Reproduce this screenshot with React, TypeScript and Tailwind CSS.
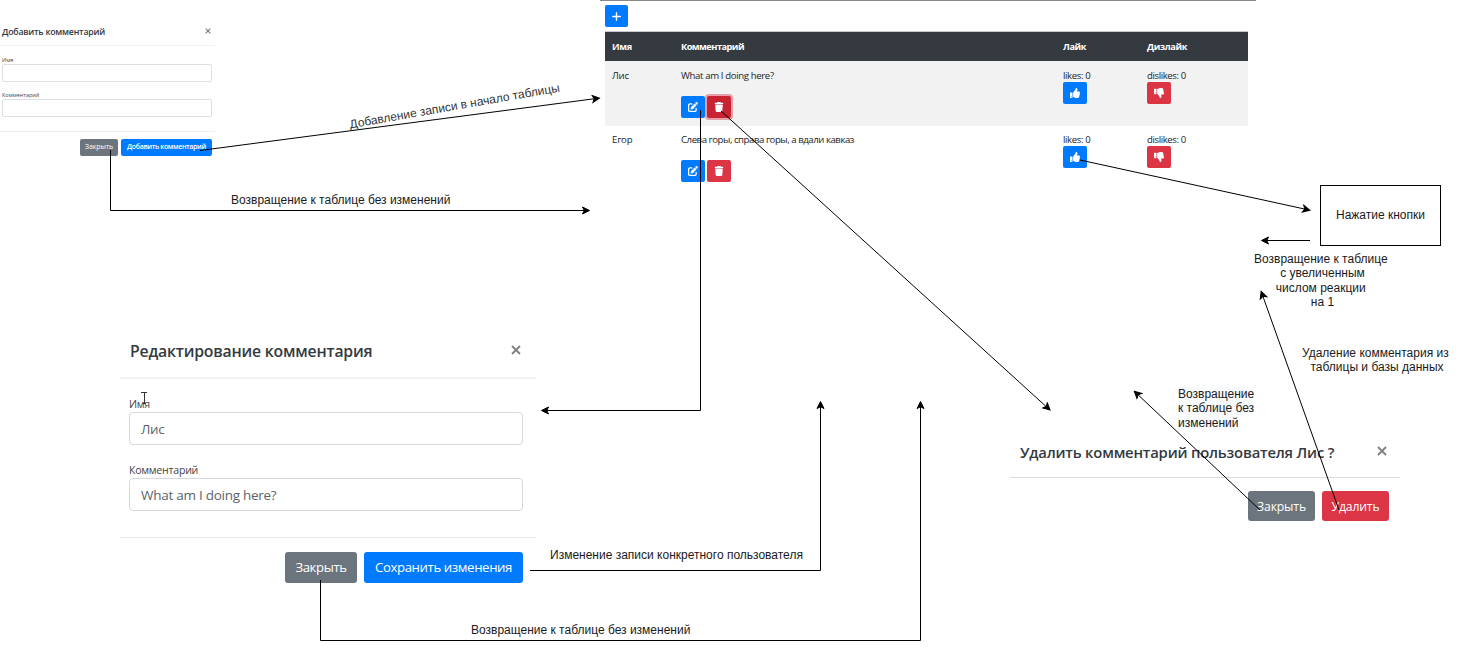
import type { ReactNode } from "react";
import { FaThumbsUp, FaThumbsDown } from "react-icons/fa";
import { FaPlus, FaPenToSquare, FaTrash } from "react-icons/fa6";

const ui = "font-['Open_Sans','Noto_Sans',sans-serif]";

function Close({ size, className }: { size: number; className: string }) {
  return (
    <svg width={size} height={size} viewBox="0 0 10 10" className={className}>
      <path d="M1 1 9 9M9 1 1 9" fill="none" stroke="currentColor" strokeWidth="1.8" />
    </svg>
  );
}

function AddDialog() {
  return (
    <section className={`absolute left-0 top-[18px] w-[215px] text-[#212529] ${ui}`}>
      <header className="flex h-[28px] items-center justify-between border-b border-[#f1f1f1] pl-[2px] pr-1">
        <h2 className="whitespace-nowrap pt-px text-[8.8px] font-semibold leading-none tracking-[-0.23px] text-[#343a40]">Добавить комментарий</h2>
        <Close size={6} className="mb-[2px] text-[#777]" />
      </header>
      <div className="flex flex-col pl-[2px] pr-[3px] pt-[10px]">
        <label className="h-[8px] text-[5.5px] leading-[8px] text-[#444]">Имя</label>
        <div className="h-[18px] rounded-[2px] border border-[#dce0e5]" />
        <label className="mt-[9px] h-[8px] text-[5.5px] leading-[8px] text-[#444]">Комментарий</label>
        <div className="h-[18px] rounded-[2px] border border-[#dce0e5]" />
      </div>
      <footer className="mt-[14px] flex justify-end gap-[3px] border-t border-[#eee] pr-[3px] pt-[7px] text-[7px] text-white">
        <button className="h-[17px] w-[38px] rounded-[2px] bg-[#6c757d] tracking-[-0.1px]">Закрыть</button>
        <button className="h-[17px] w-[91px] whitespace-nowrap rounded-[2px] bg-[#007bff] font-semibold tracking-[-0.34px]">Добавить комментарий</button>
      </footer>
    </section>
  );
}

function IconButton({ tone, children }: { tone: string; children: ReactNode }) {
  return (
    <button className={`flex h-[22px] w-6 items-center justify-center rounded-[2px] text-[10px] text-white ${tone}`}>
      {children}
    </button>
  );
}

const rows = [
  { name: "Лис", text: "What am I doing here?", focused: true, spacing: "tracking-[-0.36px]" },
  { name: "Егор", text: "Слева горы, справа горы, а вдали кавказ", focused: false, spacing: "tracking-[-0.45px]" },
];

const columns = "grid grid-cols-[69px_382px_84px_108px]";

function CommentTable() {
  return (
    <section className={`absolute left-[600px] top-0 w-[656px] border-t border-[#888] pl-[5px] pr-2 text-[9.6px] text-[#212529] ${ui}`}>
      <button className="mt-1 flex h-[22px] w-[23px] items-center justify-center rounded-[2px] bg-[#007bff] text-[11px] text-white">
        <FaPlus />
      </button>
      <div className={`${columns} mt-1 h-[30px] items-center border-t border-[#c9cccf] bg-[#343a40] text-[9.2px] font-bold tracking-[-0.5px] text-white`}>
        <span className="pl-[7px] tracking-[-0.3px]">Имя</span>
        <span className="pl-[7px]">Комментарий</span>
        <span className="pl-[7px] tracking-[-0.4px]">Лайк</span>
        <span className="pl-[7px] tracking-[-0.35px]">Дизлайк</span>
      </div>
      {rows.map((row) => (
        <div key={row.name} className={`${columns} h-[65px] items-start leading-[15px] ${row.focused ? "bg-[#f2f2f2] pt-[7px]" : "bg-white pt-[6px]"}`}>
          <span className="pl-[7px] tracking-[-0.2px]">{row.name}</span>
          <div className="pl-[7px]">
            <p className={row.spacing}>{row.text}</p>
            <div className="mt-[13px] flex gap-[2px]">
              <IconButton tone="bg-[#007bff]"><FaPenToSquare /></IconButton>
              <IconButton tone={row.focused ? "bg-[#c82333] ring-2 ring-[#e8a0a8]" : "bg-[#dc3545]"}><FaTrash /></IconButton>
            </div>
          </div>
          <div className="pl-[7px] tracking-[-0.38px]">
            <p className="h-[14px]">likes: 0</p>
            <IconButton tone="bg-[#007bff]"><FaThumbsUp /></IconButton>
          </div>
          <div className="pl-[7px] tracking-[-0.4px]">
            <p className="h-[14px]">dislikes: 0</p>
            <IconButton tone="bg-[#dc3545]"><FaThumbsDown /></IconButton>
          </div>
        </div>
      ))}
    </section>
  );
}

function EditDialog() {
  return (
    <section className={`absolute left-[120px] top-[326px] w-[416px] text-[#212529] ${ui}`}>
      <header className="flex h-[53px] items-center justify-between border-b-2 border-[#f2f2f2] pl-[10px] pr-[15px]">
        <h2 className="whitespace-nowrap text-[15.8px] font-semibold tracking-[-0.2px] text-[#343a40]">Редактирование комментария</h2>
        <Close size={10} className="mb-[3px] text-[#808080]" />
      </header>
      <div className="flex flex-col pl-[9px] pr-[13px] pt-[17px]">
        <label className="h-4 text-[10.6px] leading-4 tracking-[-0.25px] text-[#444]">Имя</label>
        <div className="flex h-[33px] items-center rounded-[4px] border border-[#d3d9df] pl-[11px] pt-[2px] text-[13.4px] tracking-[-0.3px] text-[#5c636a]">Лис</div>
        <label className="mt-[17px] h-4 text-[10.6px] leading-4 tracking-[-0.25px] text-[#444]">Комментарий</label>
        <div className="flex h-[33px] items-center rounded-[4px] border border-[#d3d9df] pl-[11px] pt-[2px] text-[13.5px] tracking-[-0.27px] text-[#5c636a]">What am I doing here?</div>
      </div>
      <footer className="mt-[26px] flex justify-end gap-[7px] border-t border-[#e6e6e6] pr-[13px] pt-[14px] text-[13.2px] text-white">
        <button className="h-[31px] w-[72px] rounded-[3px] bg-[#6c757d] pt-px tracking-[-0.4px]">Закрыть</button>
        <button className="h-[31px] w-[159px] whitespace-nowrap rounded-[3px] bg-[#007bff] pt-px tracking-[-0.38px]">Сохранить изменения</button>
      </footer>
    </section>
  );
}

function DeleteDialog() {
  return (
    <section className={`absolute left-[1010px] top-[427px] w-[390px] text-[#212529] ${ui}`}>
      <header className="flex h-[51px] items-center justify-between border-b border-[#dcdcdc] pl-[10px] pr-[13px]">
        <h2 className="whitespace-nowrap text-[14.8px] font-semibold tracking-[-0.19px] text-[#343a40]">Удалить комментарий пользователя Лис ?</h2>
        <Close size={10} className="mb-[2px] text-[#808080]" />
      </header>
      <footer className="flex justify-end gap-[7px] pr-[11px] pt-[13px] text-[12.2px] tracking-[-0.15px] text-white">
        <button className="h-[30px] w-[67px] rounded-[3px] bg-[#6c757d] pt-[2px]">Закрыть</button>
        <button className="h-[30px] w-[67px] rounded-[3px] bg-[#dc3545] pt-[2px]">Удалить</button>
      </footer>
    </section>
  );
}

const arrows = [
  "M200 150.5 594 98.8",
  "M110.5 150V210.5H584",
  "M700.5 110V410.5H547",
  "M721 111 1046 406.4",
  "M1080 160 1304.5 209",
  "M1310 240.5H1267",
  "M1339 510 1263 296.6",
  "M1260 510 1138.3 395",
  "M530 570.5H820.5V407",
  "M320.5 580V640.5H920.5V407",
];

function Arrows() {
  return (
    <svg className="pointer-events-none absolute left-0 top-0" width="1461" height="649">
      <defs>
        <marker id="head" markerUnits="userSpaceOnUse" markerWidth="10" markerHeight="9" refX="2.5" refY="4.5" orient="auto">
          <path d="M1 1 8 4.5 1 8 2.75 4.5Z" stroke="#000" />
        </marker>
      </defs>
      {arrows.map((d) => (
        <path key={d} d={d} fill="none" stroke="#000" markerEnd="url(#head)" />
      ))}
      <path d="M141 392.5H147M144.5 393V403M143 403.5H146" stroke="#333" fill="none" />
    </svg>
  );
}

function Note({ className, children }: { className: string; children: ReactNode }) {
  return (
    <p className={`absolute whitespace-nowrap font-['Liberation_Sans',sans-serif] text-[12px] leading-[14.4px] ${className}`}>
      {children}
    </p>
  );
}

export default function App() {
  return (
    <main className="relative h-[649px] w-[1461px] overflow-hidden bg-white">
      <AddDialog />
      <CommentTable />
      <EditDialog />
      <DeleteDialog />
      <div className="absolute left-[1320px] top-[185px] flex h-[61px] w-[121px] items-center justify-center border border-black pb-[2px] font-['Liberation_Sans',sans-serif] text-[12px] text-[#1a1a1a]">
        Нажатие кнопки
      </div>
      <Arrows />
      <Note className="left-[348px] top-[99px] -rotate-10 text-[#333]">Добавление записи в начало таблицы</Note>
      <Note className="left-[231px] top-[193px] text-[#1a1a1a]">Возвращение к таблице без изменений</Note>
      <Note className="left-[471px] top-[623px] text-[#1a1a1a]">Возвращение к таблице без изменений</Note>
      <Note className="left-[550px] top-[548px] text-[#1a1a1a]">Изменение записи конкретного пользователя</Note>
      <Note className="left-[1254px] top-[252px] text-center text-[#1a1a1a]">
        Возвращение к таблице<br />&nbsp;с увеличенным<br />числом реакции<br />&nbsp;на 1
      </Note>
      <Note className="left-[1302px] top-[346px] text-center text-[#1a1a1a]">
        Удаление комментария из<br />&nbsp;таблицы и базы данных
      </Note>
      <Note className="left-[1178px] top-[387px] text-[#1a1a1a]">
        <span className="bg-[#f8f9fa]">Возвращение<br />к таблице без<br />изменений</span>
      </Note>
    </main>
  );
}
